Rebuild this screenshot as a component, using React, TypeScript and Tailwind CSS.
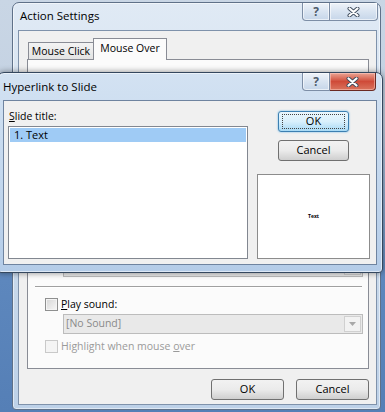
import React from "react";

function XGlyph({ w = 13, h = 10 }: { w?: number; h?: number }) {
  return (
    <svg width={w} height={h} viewBox="0 0 13 10">
      <path d="M2.5 1.5 L10.5 8.5 M10.5 1.5 L2.5 8.5" stroke="#3d4b5c" strokeWidth="4" strokeLinecap="round" fill="none" />
      <path d="M2.5 1.5 L10.5 8.5 M10.5 1.5 L2.5 8.5" stroke="#ffffff" strokeWidth="2.2" strokeLinecap="round" fill="none" />
    </svg>
  );
}

function TitleButtons({ active }: { active: boolean }) {
  return (
    <div className="flex h-[18px]">
      <div className="flex h-full w-[28px] items-center justify-center rounded-bl-[4px] border border-t-0 border-[#7d8ea6] bg-gradient-to-b from-[#eef3f9] via-[#d9e4f1] to-[#c6d6e9] text-[12px] font-bold leading-none text-[#4d5a6a] shadow-[inset_0_0_0_1px_rgba(255,255,255,0.6)]">
        ?
      </div>
      {active ? (
        <div className="flex h-full w-[46px] items-center justify-center rounded-br-[4px] border border-l-0 border-t-0 border-[#6b2a22] bg-gradient-to-b from-[#e9a393] via-[#cf4a38] to-[#d9735d] shadow-[inset_0_0_0_1px_rgba(255,210,200,0.5)]">
          <XGlyph />
        </div>
      ) : (
        <div className="flex h-full w-[48px] items-center justify-center rounded-br-[4px] border border-l-0 border-t-0 border-[#7d8ea6] bg-gradient-to-b from-[#eef3f9] via-[#d9e4f1] to-[#c6d6e9] shadow-[inset_0_0_0_1px_rgba(255,255,255,0.6)]">
          <XGlyph />
        </div>
      )}
    </div>
  );
}

function Btn({ children, w, focus = false }: { children: React.ReactNode; w: number; focus?: boolean }) {
  return (
    <div
      style={{ width: w }}
      className={
        "flex h-[21px] items-center justify-center whitespace-nowrap rounded-[3px] border text-[11px] text-black " +
        (focus
          ? "border-[#3c7fb1] bg-gradient-to-b from-[#eaf6fd] via-[#d9f0fc] to-[#a7d9f5] shadow-[0_0_2px_#5fb4e8]"
          : "border-[#707070] bg-gradient-to-b from-[#f2f2f2] via-[#ebebeb] to-[#cfcfcf]")
      }
    >
      {focus ? (
        <div className="flex h-[15px] w-[calc(100%-6px)] items-center justify-center border border-dotted border-[#444]">
          {children}
        </div>
      ) : (
        children
      )}
    </div>
  );
}

function Check({ disabled = false }: { disabled?: boolean }) {
  return (
    <div
      className={
        "h-[13px] w-[13px] border " +
        (disabled
          ? "border-[#c9c9c9] bg-[#f4f4f4]"
          : "border-[#8e8f8f] bg-gradient-to-br from-[#d6d6d6] to-[#f7f7f7] shadow-[inset_0_0_0_1px_#f4f4f4]")
      }
    />
  );
}

function Combo({ text }: { text?: string }) {
  return (
    <div className="ml-[35px] flex h-[20px] w-[300px] items-stretch border border-[#bcbcbc] bg-[#e9e9e9]">
      <div className="flex flex-1 items-center whitespace-nowrap pl-[2px] text-[10.5px] text-[#8a8a8a]">{text}</div>
      <div className="my-[1px] mr-[1px] flex w-[17px] items-center justify-center border border-[#d0d0d0] bg-[#f2f2f2]">
        <svg width="7" height="4" viewBox="0 0 7 4">
          <path d="M0 0 L7 0 L3.5 4 Z" fill="#a8a8a8" />
        </svg>
      </div>
    </div>
  );
}

export default function App() {
  return (
    <div className="relative h-[412px] w-[385px] overflow-hidden bg-[linear-gradient(to_bottom,#c9d6e5_0px,#c3d1e2_120px,#5d87bd_280px,#557fb6_412px)] font-['Open_Sans',sans-serif] text-[10.5px] text-black">
      {/* Action Settings window */}
      <div className="absolute left-[12px] top-[2px] flex h-[408px] w-[369px] flex-col rounded-t-[7px] rounded-b-[4px] border border-[#5f7189] bg-gradient-to-b from-[#e0eaf5] via-[#cddcec] to-[#bdd1e8] shadow-[inset_0_0_0_1px_rgba(255,255,255,0.5)]">
        <div className="flex h-[27px] items-start justify-between">
          <div className="whitespace-nowrap pl-[7px] pt-[5px] text-[11.5px] leading-[16px]">Action Settings</div>
          <div className="mr-[2px]">
            <TitleButtons active={false} />
          </div>
        </div>
        <div className="mb-[4px] ml-[5px] mr-[3px] flex flex-1 flex-col border border-[#7f92ab] bg-[#f0f0f0] pl-[8px] pt-[7px]">
          {/* tabs */}
          <div className="flex h-[21px] items-end">
            <div className="ml-[1px] flex h-[17px] w-[66px] items-center justify-center whitespace-nowrap border border-b-0 border-[#898c95] bg-gradient-to-b from-[#f3f3f3] to-[#e3e3e3] pt-[1px] text-[10.5px]">
              Mouse Click
            </div>
            <div className="relative z-10 -mb-[1px] -ml-[1px] flex h-[22px] w-[74px] items-start justify-center whitespace-nowrap border border-b-0 border-[#898c95] bg-[#fbfbfb] pt-[2px] text-[10.5px]">
              Mouse Over
            </div>
          </div>
          <div className="flex h-[310px] w-[342px] flex-col border border-[#898c95] bg-[#fbfbfb] pb-[15px]">
            <div className="ml-[7px] mt-[10px] whitespace-nowrap text-[10.5px] leading-[15px]">Action on mouse over</div>
            <div className="flex-1" />
            <Combo />
            <div className="ml-[7px] mt-[9px] h-[2px] w-[327px] border-t border-b border-t-[#a0a0a0] border-b-white" />
            <div className="ml-[17px] mt-[9px] flex items-center">
              <Check />
              <div className="ml-[3px] whitespace-nowrap text-[10.5px] leading-[14px]">
                <u>P</u>lay sound:
              </div>
            </div>
            <div className="mt-[3px]">
              <Combo text="[No Sound]" />
            </div>
            <div className="ml-[17px] mt-[5px] flex items-center">
              <Check disabled />
              <div className="ml-[3px] whitespace-nowrap text-[10.5px] leading-[14px] text-[#9a9a9a]">
                Highlight when mouse <u>o</u>ver
              </div>
            </div>
          </div>
          <div className="mt-[10px] flex justify-end gap-[12px] pr-[7px]">
            <Btn w={73}>OK</Btn>
            <Btn w={73}>Cancel</Btn>
          </div>
        </div>
      </div>

      {/* Hyperlink to Slide window */}
      <div className="absolute left-[-3px] top-[72px] flex h-[201px] w-[386px] flex-col rounded-t-[7px] rounded-b-[4px] border border-[#34475e] bg-gradient-to-b from-[#d3e2f2] via-[#c4d8ee] to-[#b4cce8] shadow-[0_0_6px_rgba(0,0,0,0.45),inset_0_0_0_1px_rgba(255,255,255,0.55)]">
        <div className="flex h-[27px] items-start justify-between">
          <div className="whitespace-nowrap pl-[5px] pt-[6px] text-[11.5px] leading-[16px]">Hyperlink to Slide</div>
          <div className="mr-[6px]">
            <TitleButtons active />
          </div>
        </div>
        <div className="mb-[7px] ml-[5px] mr-[5px] flex flex-1 border border-[#6f84a0] bg-[#f0f0f0] pl-[4px]">
          <div className="flex w-[240px] flex-col">
            <div className="mt-[7px] h-[18px] whitespace-nowrap pl-[1px] text-[10.5px] leading-[17px]">
              <u>S</u>lide title:
            </div>
            <div className="h-[133px] w-[240px] border border-[#828790] bg-white p-[1px]">
              <div className="flex h-[14px] items-center bg-[#9fcbf5] pl-[4px] text-[11px] leading-[14px]">1. Text</div>
            </div>
          </div>
          <div className="ml-[9px] flex w-[113px] flex-col">
            <div className="ml-[21px] mt-[10px]">
              <Btn w={71} focus>
                OK
              </Btn>
            </div>
            <div className="ml-[21px] mt-[8px]">
              <Btn w={71}>Cancel</Btn>
            </div>
            <div className="mt-[13px] flex h-[85px] w-[113px] items-center justify-center border border-[#8c8c8c] bg-white">
              <span className="text-[5px] font-bold leading-none">Text</span>
            </div>
          </div>
        </div>
      </div>
    </div>
  );
}
